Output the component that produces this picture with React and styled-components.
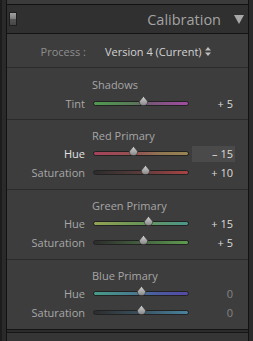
import React from "react";
import styled, { createGlobalStyle } from "styled-components";

const Global = createGlobalStyle`
  html, body { margin: 0; padding: 0; background: #262626; }
  body { font-family: "Open Sans", "DejaVu Sans", sans-serif; }
`;

const Frame = styled.div`
  width: 253px;
  height: 341px;
  display: flex;
  overflow: hidden;
  background: #2a2a2a;
`;

const Gutter = styled.div`
  width: ${(p) => p.$w}px;
  flex: none;
  background: #2a2a2a;
  border-left: ${(p) => (p.$left ? "2px solid #1c1c1c" : "none")};
  box-sizing: border-box;
`;

const Column = styled.div`
  flex: 1;
  display: flex;
  flex-direction: column;
  border-left: 1px solid #121212;
  border-right: 1px solid #121212;
`;

const PrevPanel = styled.div`
  height: 4px;
  background: #3b3b3b;
  border-bottom: 1px solid #121212;
`;

const Header = styled.div`
  height: 28px;
  display: flex;
  align-items: center;
  padding: 0 4px 0 2px;
  background: #303030;
  border-bottom: 1px solid #141414;
`;

const Collapse = styled.div`
  flex: none;
  width: 8px;
  height: 14px;
  box-sizing: border-box;
  border: 1px solid #1e1e1e;
  background: linear-gradient(
    to bottom,
    #a2a2a2 0%,
    #7c7c7c 48%,
    #555 52%,
    #464646 100%
  );
`;

const HeaderTitle = styled.div`
  flex: 1;
  text-align: right;
  font-size: 14.5px;
  color: #a3a3a3;
  padding-right: 13px;
  padding-top: 1px;
`;

const Body = styled.div`
  flex: none;
  height: 295px;
  background: #3d3d3d;
  display: flex;
  flex-direction: column;
  border-bottom: 1px solid #141414;
`;

const ProcessRow = styled.div`
  height: 34px;
  display: flex;
  align-items: center;
  gap: 19px;
  padding-top: 1px;
  box-sizing: border-box;
  font-size: 11px;
`;

const ProcessLabel = styled.div`
  width: 79px;
  text-align: right;
  color: #8e8e8e;
`;

const ProcessValue = styled.div`
  display: flex;
  align-items: center;
  gap: 3px;
  color: #d2d2d2;
`;

const Section = styled.div`
  border-top: 1px solid #2b2b2b;
  padding: ${(p) => p.$top}px 0 ${(p) => p.$bottom}px;
`;

const SectionTitle = styled.div`
  height: ${(p) => p.$h}px;
  line-height: ${(p) => p.$h}px;
  padding-left: 85px;
  font-size: 11px;
  color: #a6a6a6;
`;

const Row = styled.div`
  height: 19px;
  display: grid;
  grid-template-columns: 86px 96px 46px;
  align-items: center;
  font-size: 11px;
`;

const Label = styled.div`
  text-align: right;
  padding-right: 8px;
  color: ${(p) => (p.$active ? "#e2e2e2" : "#a8a8a8")};
`;

const Track = styled.div`
  position: relative;
  height: 3px;
  border: 1px solid #222;
  border-radius: 3px;
  background: ${(p) => p.$bg};
`;

const Thumb = styled.svg`
  position: absolute;
  top: -6px;
  width: 9px;
  height: 10px;
`;

const ValueBox = styled.div`
  margin-left: 3px;
  height: 16px;
  line-height: 16px;
  padding-right: 2px;
  text-align: right;
  background: ${(p) => (p.$active ? "#4a4a4a" : "transparent")};
  color: ${(p) => (p.$zero ? "#858585" : "#dcdcdc")};
`;

const Bottom = styled.div`
  flex: 1;
  background: #353535;
  border-top: 2px solid #2c2c2c;
  box-shadow: inset 0 1px 0 #161616;
`;

const tracks = {
  tint: "linear-gradient(to right, #4f9a4f, #5a765a 45%, #735873 55%, #a04ba0)",
  redHue: "linear-gradient(to right, #a5435a, #935252 45%, #907552 70%, #978452)",
  redSat: "linear-gradient(to right, #2c2c2c, #553a3a 45%, #a84444)",
  greenHue: "linear-gradient(to right, #92a352, #6a9458 50%, #49978a)",
  greenSat: "linear-gradient(to right, #2c2c2c, #435a3d 45%, #5d9c50)",
  blueHue: "linear-gradient(to right, #479b88, #497890 45%, #4a5c9f 65%, #5549a6)",
  blueSat: "linear-gradient(to right, #2c2c2c, #384e5a 45%, #4a829e)",
};

const sections = [
  {
    title: "Shadows",
    top: 8,
    h: 18,
    bottom: 6,
    rows: [{ label: "Tint", value: 5, track: "tint" }],
  },
  {
    title: "Red Primary",
    top: 7,
    h: 17,
    bottom: 7,
    rows: [
      { label: "Hue", value: -15, track: "redHue", active: true },
      { label: "Saturation", value: 10, track: "redSat" },
    ],
  },
  {
    title: "Green Primary",
    top: 7,
    h: 17,
    bottom: 7,
    rows: [
      { label: "Hue", value: 15, track: "greenHue" },
      { label: "Saturation", value: 5, track: "greenSat" },
    ],
  },
  {
    title: "Blue Primary",
    top: 7,
    h: 17,
    bottom: 7,
    rows: [
      { label: "Hue", value: 0, track: "blueHue" },
      { label: "Saturation", value: 0, track: "blueSat" },
    ],
  },
];

const fmt = (v) => (v > 0 ? `+ ${v}` : v < 0 ? `\u2013 ${-v}` : "0");

function Slider({ bg, value }) {
  const left = 47 + value * 0.48 - 4.5;
  return (
    <Track $bg={bg}>
      <Thumb viewBox="0 0 9 10" style={{ left: `${left}px` }}>
        <defs>
          <linearGradient id="tg" x1="0" y1="0" x2="0" y2="1">
            <stop offset="0" stopColor="#d4d4d4" />
            <stop offset="1" stopColor="#858585" />
          </linearGradient>
        </defs>
        <path
          d="M4.5 0.3 L8.5 5.2 Q8.8 9.6 4.5 9.6 Q0.2 9.6 0.5 5.2 Z"
          fill="url(#tg)"
          stroke="#2a2a2a"
          strokeWidth="0.6"
        />
      </Thumb>
    </Track>
  );
}

export default function App() {
  return (
    <>
      <Global />
      <Frame>
        <Gutter $w={6} $left />
        <Column>
          <PrevPanel />
          <Header>
            <Collapse />
            <HeaderTitle>Calibration</HeaderTitle>
            <svg width="10" height="9" viewBox="0 0 10 9">
              <path d="M0 0 H10 L5 9 Z" fill="#a8a8a8" />
            </svg>
          </Header>
          <Body>
            <ProcessRow>
              <ProcessLabel>Process :</ProcessLabel>
              <ProcessValue>
                Version 4 (Current)
                <svg width="6" height="9" viewBox="0 0 6 9">
                  <path d="M3 0 L6 3.5 H0 Z M0 5.5 H6 L3 9 Z" fill="#bdbdbd" />
                </svg>
              </ProcessValue>
            </ProcessRow>
            {sections.map((s) => (
              <Section key={s.title} $top={s.top} $bottom={s.bottom}>
                <SectionTitle $h={s.h}>{s.title}</SectionTitle>
                {s.rows.map((r) => (
                  <Row key={r.label}>
                    <Label $active={r.active}>{r.label}</Label>
                    <Slider bg={tracks[r.track]} value={r.value} />
                    <ValueBox $active={r.active} $zero={r.value === 0}>
                      {fmt(r.value)}
                    </ValueBox>
                  </Row>
                ))}
              </Section>
            ))}
          </Body>
          <Bottom />
        </Column>
        <Gutter $w={4} />
      </Frame>
    </>
  );
}
